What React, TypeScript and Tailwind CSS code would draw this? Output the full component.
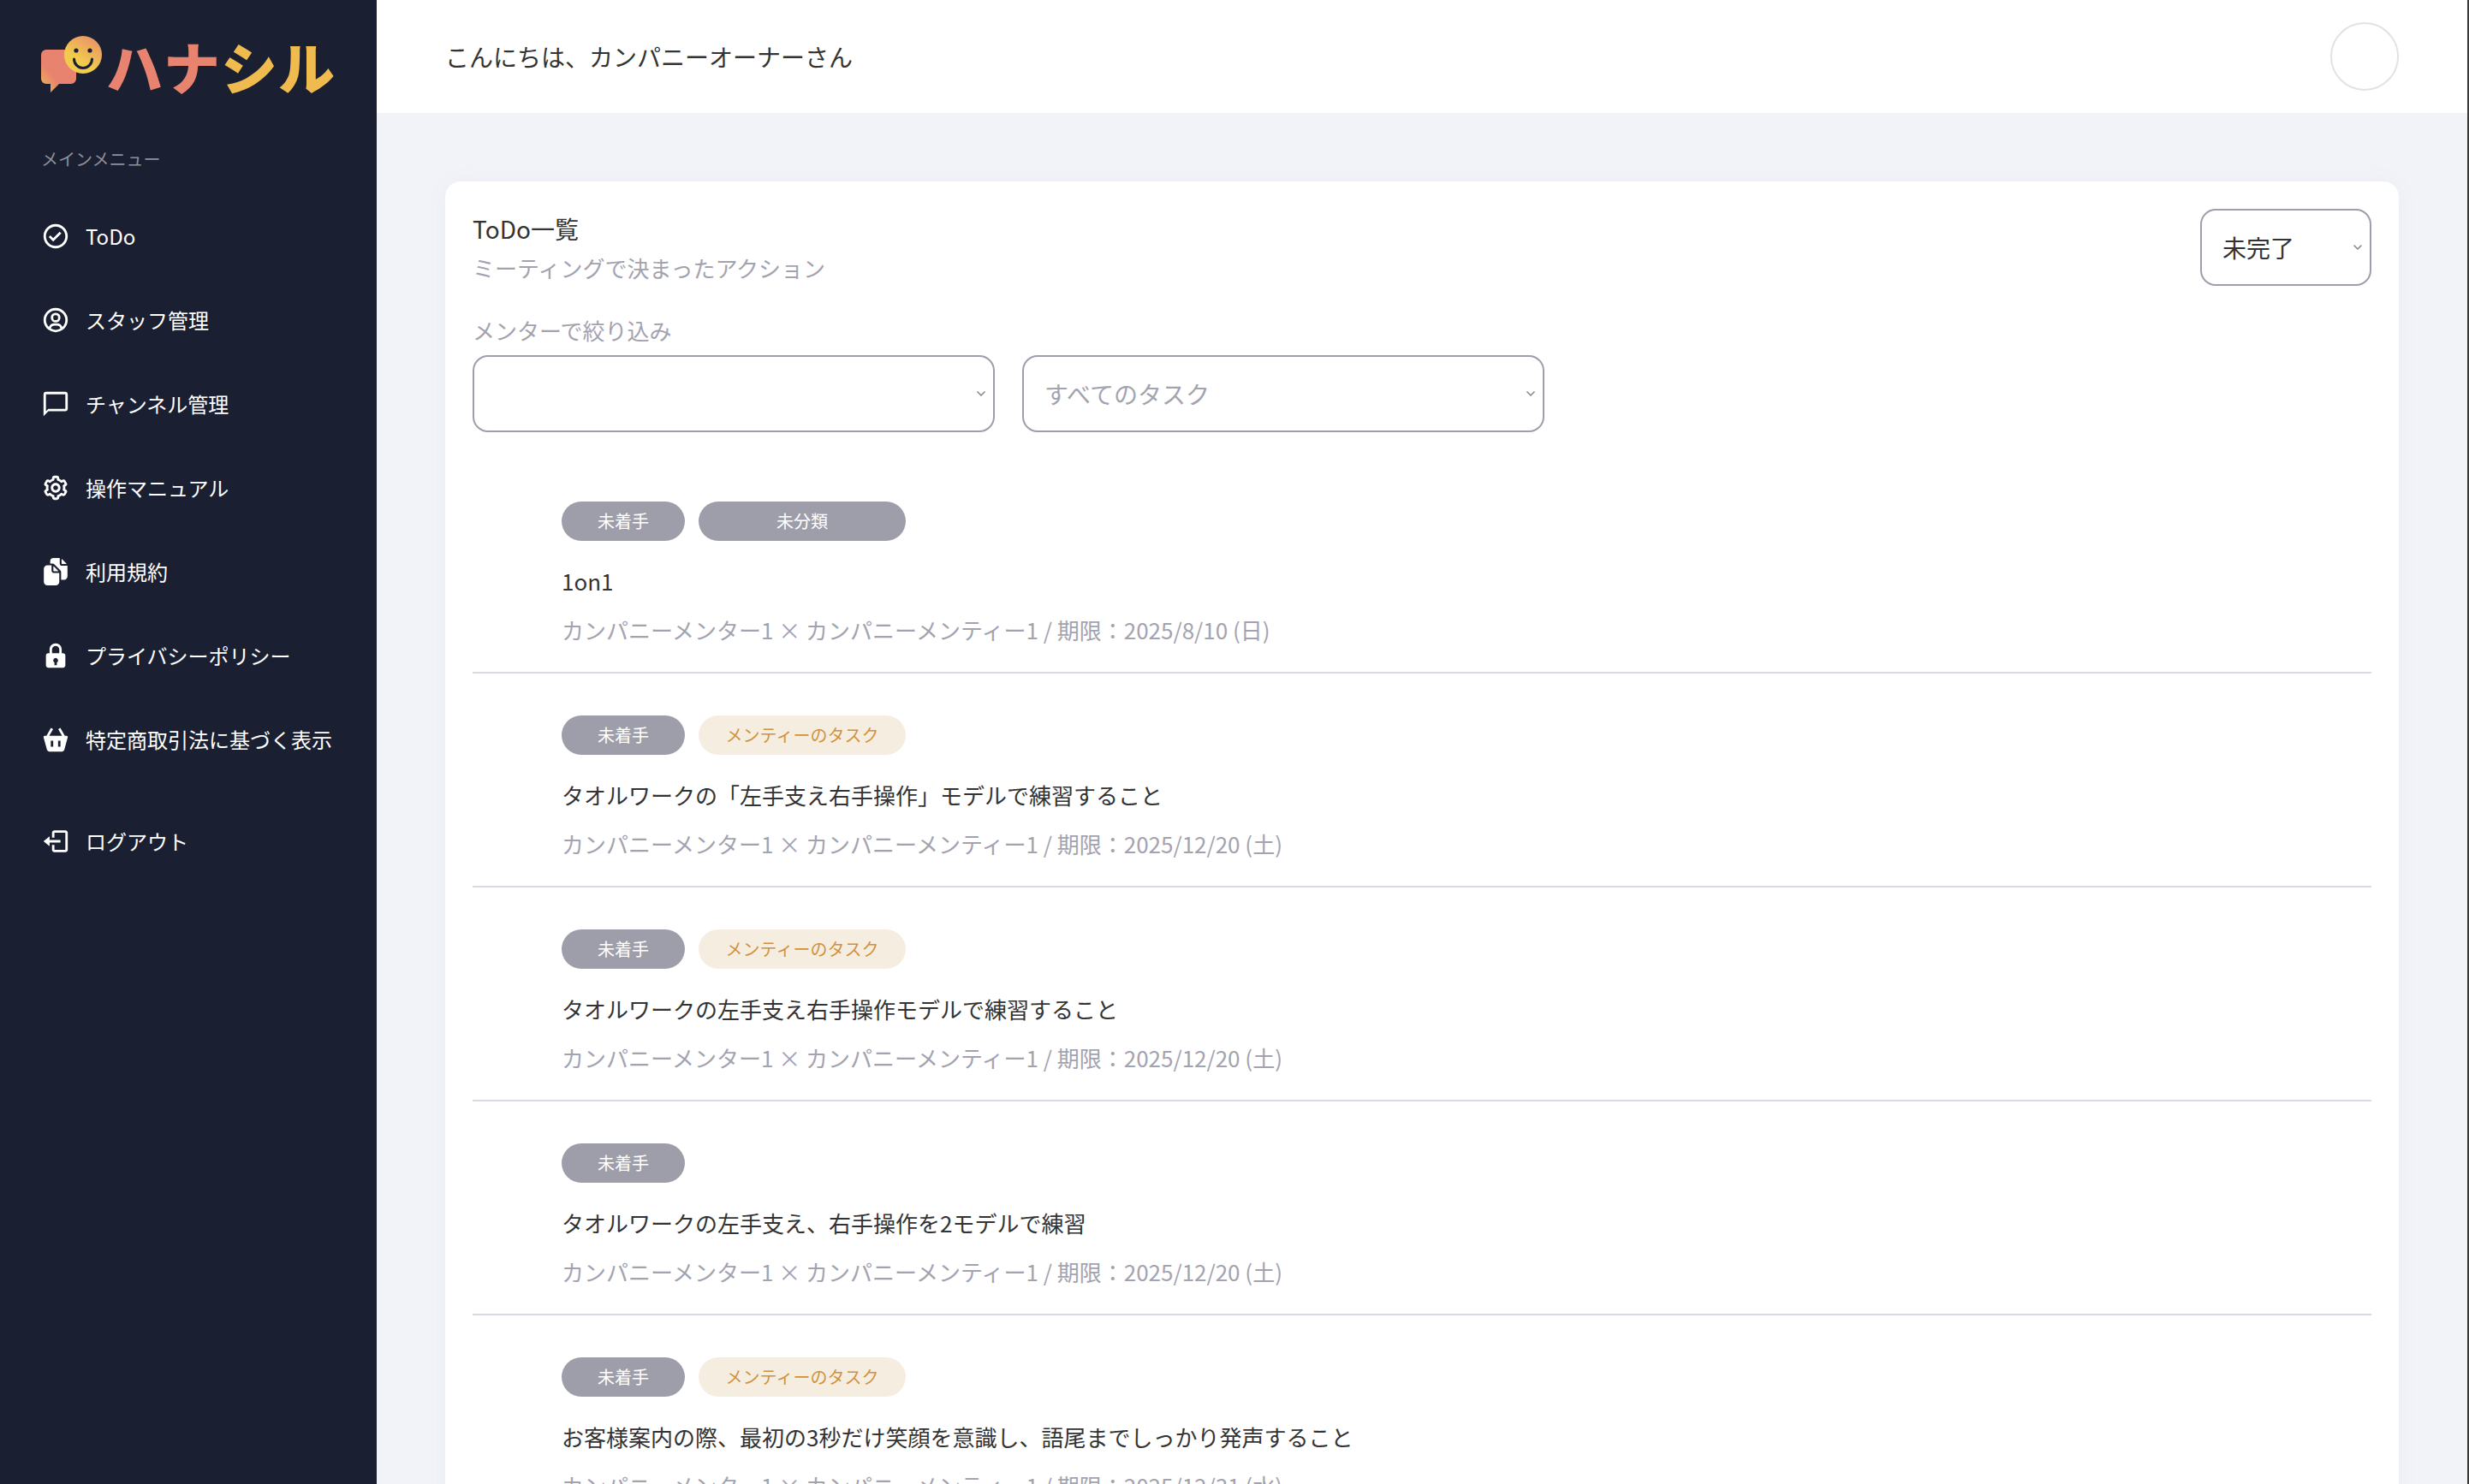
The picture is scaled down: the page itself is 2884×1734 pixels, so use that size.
import { ChevronDown } from "lucide-react";
import { BiCheckCircle, BiUserCircle, BiCog, BiLogOut, BiSolidLock, BiSolidBasket } from "react-icons/bi";
import { IoDocuments } from "react-icons/io5";
import { MdOutlineChatBubbleOutline } from "react-icons/md";

const MENU = [
  { label: "ToDo", icon: <BiCheckCircle size={34} /> },
  { label: "スタッフ管理", icon: <BiUserCircle size={34} /> },
  { label: "チャンネル管理", icon: <MdOutlineChatBubbleOutline size={34} /> },
  { label: "操作マニュアル", icon: <BiCog size={34} /> },
  { label: "利用規約", icon: <IoDocuments size={34} /> },
  { label: "プライバシーポリシー", icon: <BiSolidLock size={34} /> },
  { label: "特定商取引法に基づく表示", icon: <BiSolidBasket size={34} /> },
];

const TODOS = [
  { tag: "未分類", title: "1on1", due: "2025/8/10 (日)" },
  { tag: "メンティーのタスク", title: "タオルワークの「左手支え右手操作」モデルで練習すること", due: "2025/12/20 (土)" },
  { tag: "メンティーのタスク", title: "タオルワークの左手支え右手操作モデルで練習すること", due: "2025/12/20 (土)" },
  { tag: "", title: "タオルワークの左手支え、右手操作を2モデルで練習", due: "2025/12/20 (土)" },
  { tag: "メンティーのタスク", title: "お客様案内の際、最初の3秒だけ笑顔を意識し、語尾までしっかり発声すること", due: "2025/12/31 (水)" },
];

const LogoMark = () => (
  <svg width="72" height="68" viewBox="0 0 72 68" className="shrink-0">
    <defs>
      <linearGradient id="bubble" x1="0" y1="1" x2="0.6" y2="0.4">
        <stop offset="0" stopColor="#f0bb4e" />
        <stop offset="0.6" stopColor="#e8836f" />
      </linearGradient>
      <linearGradient id="face" x1="0.8" y1="0" x2="0.3" y2="0.8">
        <stop offset="0" stopColor="#e8906a" />
        <stop offset="0.8" stopColor="#f2cb4c" />
      </linearGradient>
    </defs>
    <path
      d="M6 16h29a6 6 0 0 1 6 6v28a6 6 0 0 1-6 6H21L11 66v-10H6a6 6 0 0 1-6-6V22a6 6 0 0 1 6-6z"
      fill="url(#bubble)"
    />
    <circle cx="49" cy="22" r="22" fill="url(#face)" />
    <circle cx="41" cy="17" r="2.6" fill="#1a2032" />
    <circle cx="57" cy="17" r="2.6" fill="#1a2032" />
    <path d="M38.500 27a10.500 10.500 0 0 0 21 0" fill="none" stroke="#1a2032" strokeWidth="3" strokeLinecap="round" />
  </svg>
);

const Select = ({ label, width, large }: { label: string; width: string; large?: boolean }) => (
  <div className={`relative h-[90px] rounded-[18px] border-2 border-[#9e9eac] bg-white flex items-center px-[24px] text-[28px] ${width} ${large ? "text-[#333333]" : "text-[#a3a3b0]"}`}>
    {label}
    <ChevronDown size={16} strokeWidth={2.5} className="absolute right-[6px] top-1/2 -translate-y-1/2 text-[#8a8a8a]" />
  </div>
);

const TodoRow = ({ tag, title, due, last }: { tag: string; title: string; due: string; last?: boolean }) => (
  <li className={`pt-[49px] pb-[30px] pl-[104px] ${last ? "" : "border-b-2 border-[#d9d9e5]"}`}>
    <div className="flex gap-[16px]">
      <span className="w-[144px] h-[46px] rounded-full bg-[#9e9eaa] text-white text-[20px] flex items-center justify-center">未着手</span>
      {tag === "未分類" && (
        <span className="w-[242px] h-[46px] rounded-full bg-[#9e9eaa] text-white text-[20px] flex items-center justify-center">{tag}</span>
      )}
      {tag === "メンティーのタスク" && (
        <span className="w-[242px] h-[46px] rounded-full bg-[#f6ede1] text-[#d0923f] text-[20px] flex items-center justify-center">{tag}</span>
      )}
    </div>
    <p className="mt-[27px] text-[26px] leading-[39px] text-[#333333]">{title}</p>
    <p className="mt-[18px] text-[26px] leading-[39px] text-[#a3a3b0]">
      カンパニーメンター1 × カンパニーメンティー1 / 期限：{due}
    </p>
  </li>
);

export default function App() {
  return (
    <div className="flex h-[1734px] overflow-hidden bg-[#f1f3f8] border-r-2 border-[#3a3a3a] font-['Noto_Sans_CJK_JP',sans-serif]">
      <aside className="w-[440px] shrink-0 bg-[#1a2032] text-white px-[48px] pt-[42px]">
        <div className="flex items-start gap-[10px] h-[68px]">
          <LogoMark />
          <div className="text-[66px] leading-[68px] font-black tracking-[1px] whitespace-nowrap -ml-[6px]">
            <span className="text-[#e8836f]">ハナ</span>
            <span className="text-[#f0bb4e]">シル</span>
          </div>
        </div>
        <p className="mt-[61px] text-[20px] leading-[30px] text-[#8d909b]">メインメニュー</p>
        <nav className="mt-[26px] flex flex-col">
          {MENU.map((m) => (
            <a key={m.label} className="h-[98px] flex items-center gap-[18px] text-[24px] whitespace-nowrap">
              {m.icon}
              {m.label}
            </a>
          ))}
          <a className="mt-[21px] h-[98px] flex items-center gap-[18px] text-[24px]">
            <BiLogOut size={34} />
            ログアウト
          </a>
        </nav>
      </aside>
      <div className="flex-1 min-w-0 flex flex-col">
        <header className="h-[132px] shrink-0 bg-white flex items-center justify-between pl-[80px] pr-[80px]">
          <p className="text-[28px] text-[#333333]">こんにちは、カンパニーオーナーさん</p>
          <div className="w-[80px] h-[80px] rounded-full border-2 border-[#e2e2e2]" />
        </header>
        <main className="flex-1 px-[80px] pt-[80px]">
          <section className="rounded-[18px] bg-white p-[32px] shadow-[0_0_24px_rgba(120,130,170,0.05)]">
            <div className="flex items-start justify-between">
              <div className="pt-[2px]">
                <h2 className="text-[28px] leading-[42px] text-[#333333]">ToDo一覧</h2>
                <p className="mt-[5px] text-[26px] leading-[39px] text-[#a3a3b0]">ミーティングで決まったアクション</p>
              </div>
              <Select label="未完了" width="w-[200px]" large />
            </div>
            <p className="mt-[32px] text-[26px] leading-[39px] text-[#a3a3b0]">メンターで絞り込み</p>
            <div className="mt-[10px] flex gap-[32px]">
              <Select label="" width="w-[610px]" />
              <Select label="すべてのタスク" width="w-[610px]" />
            </div>
            <ul className="mt-[32px]">
              {TODOS.map((t, i) => (
                <TodoRow key={i} {...t} last={i === TODOS.length - 1} />
              ))}
            </ul>
          </section>
        </main>
      </div>
    </div>
  );
}
